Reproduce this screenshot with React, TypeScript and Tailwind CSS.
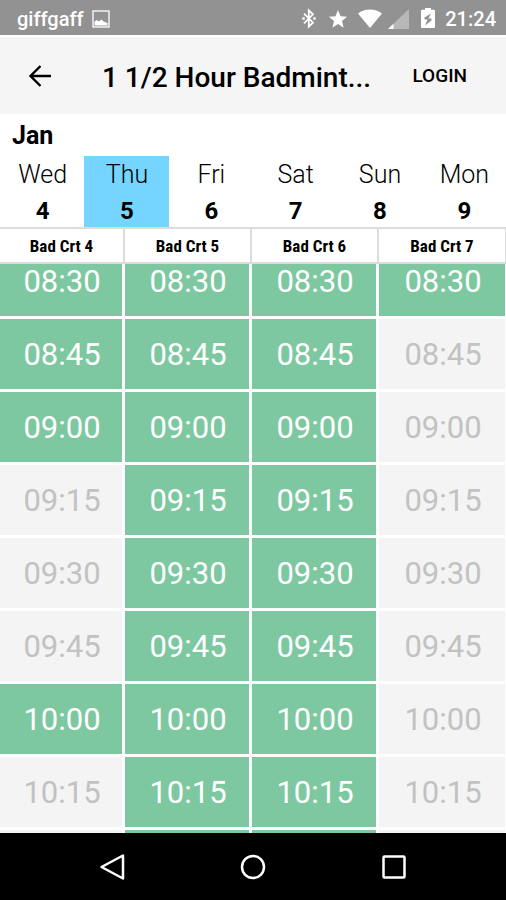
import React, { useLayoutEffect, useRef, useState } from 'react';

const DAYS = [
  { name: 'Wed', date: 4 },
  { name: 'Thu', date: 5 },
  { name: 'Fri', date: 6 },
  { name: 'Sat', date: 7 },
  { name: 'Sun', date: 8 },
  { name: 'Mon', date: 9 },
];

const COURTS = ['Bad Crt 4', 'Bad Crt 5', 'Bad Crt 6', 'Bad Crt 7'];

// one flag per court, true = bookable
const SLOTS: { time: string; free: boolean[] }[] = [
  { time: '08:30', free: [true, true, true, true] },
  { time: '08:45', free: [true, true, true, false] },
  { time: '09:00', free: [true, true, true, false] },
  { time: '09:15', free: [false, true, true, false] },
  { time: '09:30', free: [false, true, true, false] },
  { time: '09:45', free: [false, true, true, false] },
  { time: '10:00', free: [true, true, true, false] },
  { time: '10:15', free: [false, true, true, false] },
  { time: '10:30', free: [false, true, true, false] },
];

const StatusBar: React.FC = () => (
  <div className="flex h-[35px] shrink-0 items-center bg-[#929292] pt-0.5 pr-2.5 pl-[17px] text-xl font-medium text-white">
    <span>giffgaff</span>
    <svg className="ml-2 h-[18px] w-[18px]" viewBox="0 0 18 18" fill="none">
      <rect x="1" y="1" width="16" height="16" stroke="currentColor" strokeWidth="1.3" />
      <path d="M2.5 15.500v-4l2.500-1.500 2 1.500 2.500-2 2 2 4 1.500v2.500z" fill="currentColor" />
    </svg>
    <div className="ml-auto flex items-center">
      <svg className="h-[21px] w-[14px]" viewBox="0 0 14 21" fill="none" stroke="currentColor" strokeWidth="1.8">
        <path d="M2 5.700l9 9-4.200 4V2.300l4.200 4-9 9" />
        <path d="M.300 10.500h2.400M11.300 10.500h2.400" strokeWidth="2.400" />
      </svg>
      <svg className="ml-3 h-5 w-5" viewBox="0 0 22 20" fill="currentColor">
        <path d="M11 0l2.800 7 7.200.5-5.600 4.700 1.800 7.300-6.200-4-6.200 4 1.800-7.300L1 7.500 8.200 7z" />
      </svg>
      <svg className="ml-2.5 h-5 w-6" viewBox="0 0 24 20" fill="currentColor">
        <path d="M12 19L0 4.500C3.500 1.800 7.500.5 12 .5s8.500 1.300 12 4z" />
      </svg>
      <svg className="ml-1.5 h-5 w-[21px]" viewBox="0 0 21 20" fill="currentColor">
        <path d="M21 0v20H0z" opacity="0.35" />
        <path d="M5.500 14.800V20H0z" />
      </svg>
      <svg className="ml-3 h-[21px] w-[14px]" viewBox="0 0 14 21">
        <path d="M4 0h6v1.800H13a1 1 0 011 1V19a1 1 0 01-1 1H1a1 1 0 01-1-1V2.800a1 1 0 011-1h3z" fill="currentColor" />
        <path d="M10 5.500L3.500 9.500v2h3L4 17.500l6.500-5v-2H7.500z" fill="#929292" />
      </svg>
      <span className="ml-2.5">21:24</span>
    </div>
  </div>
);

const AppHeader: React.FC = () => (
  <header className="mt-0.5 flex h-[77px] shrink-0 items-center bg-[#f5f5f5] pr-[39px] pl-[27px] text-black">
    <button type="button" aria-label="Back">
      <svg className="h-6 w-6" viewBox="0 0 24 24" fill="none" stroke="currentColor" strokeWidth="2.400">
        <path d="M24 12H3.500M13.500 2L3.500 12l10 10" />
      </svg>
    </button>
    <h1 className="ml-[51px] flex-1 truncate pt-1 text-[28px] font-medium">1 1/2 Hour Badmint...</h1>
    <button type="button" className="pt-0.5 text-[19px] font-medium">
      LOGIN
    </button>
  </header>
);

const NavBar: React.FC = () => (
  <nav className="flex h-[67px] shrink-0 items-center justify-center gap-[113px] bg-black text-white">
    <button type="button" aria-label="Back">
      <svg className="h-7 w-7" viewBox="0 0 28 28" fill="none" stroke="currentColor" strokeWidth="2.500" strokeLinejoin="round">
        <path d="M25 2.500v23L3.500 14z" />
      </svg>
    </button>
    <button type="button" aria-label="Home">
      <svg className="h-7 w-7" viewBox="0 0 28 28" fill="none" stroke="currentColor" strokeWidth="2.500">
        <circle cx="14" cy="14" r="11" />
      </svg>
    </button>
    <button type="button" aria-label="Recent apps">
      <svg className="h-7 w-7" viewBox="0 0 28 28" fill="none" stroke="currentColor" strokeWidth="2.500">
        <rect x="3.500" y="3.500" width="21" height="21" rx="1" />
      </svg>
    </button>
  </nav>
);

export default function App() {
  const [selected, setSelected] = useState(5);
  const scroller = useRef<HTMLDivElement>(null);

  // the list opens slightly scrolled, first row tucked under the court names
  useLayoutEffect(() => {
    if (scroller.current) scroller.current.scrollTop = 18;
  }, []);

  return (
    <div className="flex h-screen flex-col bg-white font-[Roboto,sans-serif]">
      <StatusBar />
      <AppHeader />

      <h2 className="shrink-0 px-3 pt-1 pb-0.5 text-[25px] leading-9 font-bold text-black">Jan</h2>
      <div className="grid shrink-0 grid-cols-6">
        {DAYS.map((day) => (
          <button
            key={day.date}
            type="button"
            onClick={() => setSelected(day.date)}
            className={`flex h-[71px] flex-col items-center pt-px pl-px ${day.date === selected ? 'bg-[#75d5ff]' : ''}`}
          >
            <span className="text-[25px] leading-9 font-light text-black">{day.name}</span>
            <span className="text-2xl leading-9 font-bold text-black">{day.date}</span>
          </button>
        ))}
      </div>

      <div ref={scroller} className="min-h-0 flex-1 overflow-y-auto [scrollbar-width:none]">
        <table className="w-full table-fixed border-separate border-spacing-0">
          <thead className="sticky top-0 z-10">
            <tr>
              {COURTS.map((court) => (
                <th
                  key={court}
                  scope="col"
                  className="h-[37px] border-y-2 border-r-2 border-[#dcdcdc] bg-white p-0 font-['Roboto_Condensed','Liberation_Sans_Narrow',sans-serif] text-[17px] leading-5 font-bold text-black first:w-[125px] last:border-r"
                >
                  {court}
                </th>
              ))}
            </tr>
          </thead>
          <tbody>
            {SLOTS.map((slot) => (
              <tr key={slot.time}>
                {slot.free.map((free, i) => (
                  <td key={COURTS[i]} className="p-0 pr-[3px] pb-[3px] last:pr-px">
                    <button
                      type="button"
                      disabled={!free}
                      className={`block h-[70px] w-full pt-[3px] pl-0.5 text-[31px] ${free ? 'bg-[#7dc8a0] text-white' : 'bg-[#f4f4f4] text-[#c2c2c2]'}`}
                    >
                      {slot.time}
                    </button>
                  </td>
                ))}
              </tr>
            ))}
          </tbody>
        </table>
      </div>

      <NavBar />
    </div>
  );
}
